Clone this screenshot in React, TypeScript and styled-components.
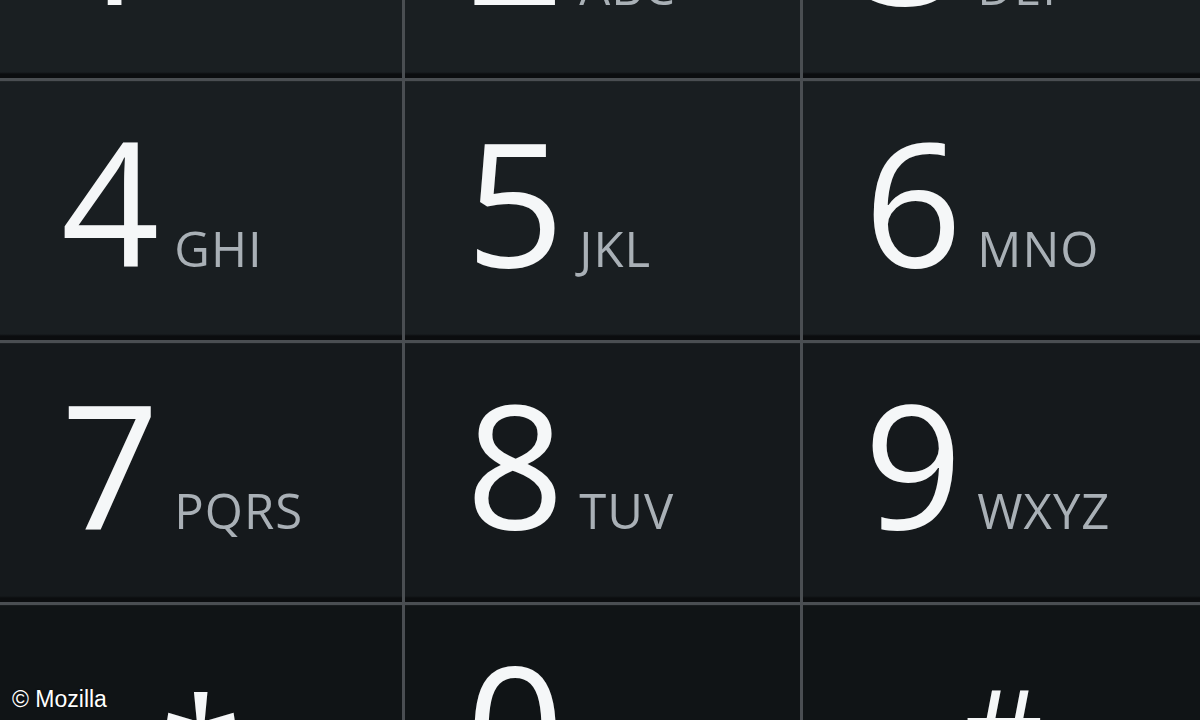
import React from "react";
import styled, { createGlobalStyle } from "styled-components";

const Global = createGlobalStyle`
  html, body { margin: 0; padding: 0; background: #0d0f11; }
  body { width: 1200px; height: 720px; overflow: hidden; }
  #root { width: 1200px; height: 720px; }
`;

const Screen = styled.div`
  position: relative;
  width: 1200px;
  height: 720px;
  overflow: hidden;
  background: #4a4e52;
`;

const Pad = styled.div`
  display: grid;
  grid-template-columns: 402px 395px 397px;
  grid-auto-rows: 259px;
  column-gap: 3px;
  row-gap: 3px;
  margin-top: -181px;
  background: #4a4e52;
`;

const rowBg = ["#1a1f22", "#191e21", "#15191c", "#101416"];

const Key = styled.div<{ $row: number; $center?: boolean }>`
  position: relative;
  display: flex;
  align-items: baseline;
  justify-content: ${(p) => (p.$center ? "center" : "flex-start")};
  box-sizing: border-box;
  padding: 33px 0 0 ${(p) => (p.$center ? "0" : "61px")};
  background: linear-gradient(
    to bottom,
    ${(p) => rowBg[p.$row]} 0%,
    ${(p) => rowBg[p.$row]} calc(100% - 6px),
    #0b0d0f calc(100% - 4px),
    #0b0d0f 100%
  );
  box-shadow: inset 0 1px 0 rgba(255, 255, 255, 0.03);
`;

const Digit = styled.span`
  font-family: "Open Sans", "Noto Sans", sans-serif;
  font-weight: 500;
  font-size: 172px;
  line-height: 1;
  color: #f5f7f8;
`;

const Letters = styled.span`
  margin-left: 15px;
  font-family: "Open Sans", "Noto Sans", sans-serif;
  font-weight: 400;
  font-size: 49px;
  line-height: 1;
  letter-spacing: 1px;
  color: #a9b0b6;
`;

const Symbol = styled.span<{ $offset: number; $size: number }>`
  display: block;
  margin-top: ${(p) => p.$offset}px;
  font-family: "Open Sans", "Noto Sans", sans-serif;
  font-weight: 500;
  font-size: ${(p) => p.$size}px;
  line-height: 1;
  color: #f5f7f8;
`;

const Credit = styled.div`
  position: absolute;
  left: 12px;
  bottom: 9px;
  font-family: "Liberation Sans", Arial, sans-serif;
  font-size: 23px;
  line-height: 1;
  color: #ffffff;
  text-shadow: 0 0 2px rgba(0, 0, 0, 0.8);
`;

const keys: { d: string; l: string }[][] = [
  [
    { d: "1", l: "" },
    { d: "2", l: "ABC" },
    { d: "3", l: "DEF" },
  ],
  [
    { d: "4", l: "GHI" },
    { d: "5", l: "JKL" },
    { d: "6", l: "MNO" },
  ],
  [
    { d: "7", l: "PQRS" },
    { d: "8", l: "TUV" },
    { d: "9", l: "WXYZ" },
  ],
];

export default function App() {
  return (
    <Screen>
      <Global />
      <Pad>
        {keys.map((row, r) =>
          row.map((k) => (
            <Key key={k.d} $row={r}>
              <Digit>{k.d}</Digit>
              {k.l && <Letters>{k.l}</Letters>}
            </Key>
          ))
        )}
        <Key $row={3} $center>
          <Symbol $offset={35} $size={150}>*</Symbol>
        </Key>
        <Key $row={3}>
          <Digit>0</Digit>
          <Letters>+</Letters>
        </Key>
        <Key $row={3} $center>
          <Symbol $offset={30} $size={130}>#</Symbol>
        </Key>
      </Pad>
      <Credit>© Mozilla</Credit>
    </Screen>
  );
}
